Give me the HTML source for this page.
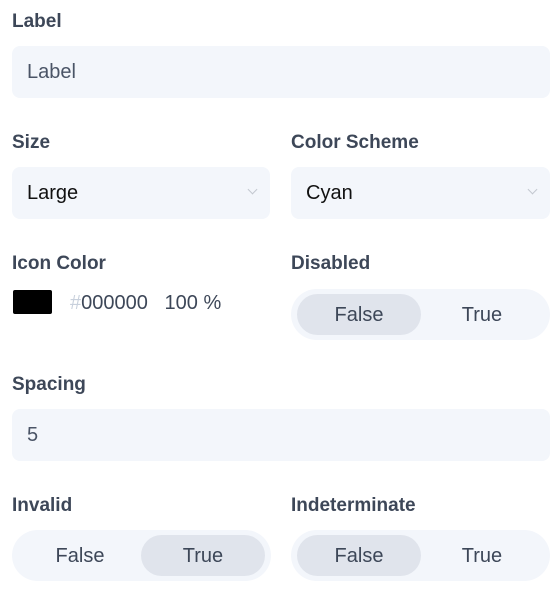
<!DOCTYPE html>
<html><head><style>
body{margin:0;width:558px;height:594px;background:#fff;font-family:"Liberation Sans",sans-serif;position:relative;overflow:hidden}
.l{position:absolute;font-size:19px;font-weight:bold;color:#3d4758;line-height:22px}
.in{position:absolute;background:#f3f6fb;border-radius:8px;height:52px;font-size:20px;line-height:52px;box-sizing:border-box;padding-left:15px}
.chev{position:absolute;right:14px;top:19px;width:6px;height:6px;border-right:1.5px solid #c3c8d0;border-bottom:1.5px solid #c3c8d0;transform:rotate(45deg)}
.seg{position:absolute;background:#f3f6fb;border-radius:26px;height:51px;width:259px}
.seg span{position:absolute;top:5px;height:41px;width:124px;border-radius:21px;text-align:center;line-height:43px;font-size:20px;color:#3d4758}
.on{background:#e0e4ec}
</style></head><body>
<div class="l" style="left:12px;top:11px">Label</div>
<div class="in" style="left:12px;top:46px;width:538px;color:#4a5466">Label</div>
<div class="l" style="left:12px;top:132px">Size</div>
<div class="in" style="left:12px;top:167px;width:258px;color:#111">Large<div class="chev"></div></div>
<div class="l" style="left:291px;top:132px">Color Scheme</div>
<div class="in" style="left:291px;top:167px;width:259px;color:#111">Cyan<div class="chev"></div></div>
<div class="l" style="left:12px;top:253px">Icon Color</div>
<div style="position:absolute;left:13px;top:290px;width:39px;height:24px;background:#000;border-radius:2px"></div>
<div style="position:absolute;left:70px;top:291px;font-size:20px;color:#3d4758;line-height:24px"><span style="color:#c8d0dc">#</span>000000&nbsp;&nbsp;&nbsp;100 %</div>
<div class="l" style="left:291px;top:253px">Disabled</div>
<div class="seg" style="left:291px;top:289px"><span class="on" style="left:6px">False</span><span style="left:129px">True</span></div>
<div class="l" style="left:12px;top:374px">Spacing</div>
<div class="in" style="left:12px;top:409px;width:538px;color:#4a5466">5</div>
<div class="l" style="left:12px;top:495px">Invalid</div>
<div class="seg" style="left:12px;top:530px"><span style="left:6px">False</span><span class="on" style="left:129px">True</span></div>
<div class="l" style="left:291px;top:495px">Indeterminate</div>
<div class="seg" style="left:291px;top:530px"><span class="on" style="left:6px">False</span><span style="left:129px">True</span></div>
</body></html>
